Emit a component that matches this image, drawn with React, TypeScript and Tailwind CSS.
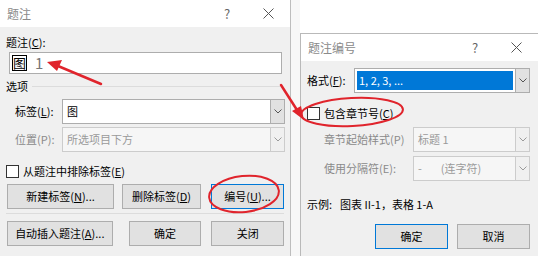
import React from "react";

const font = { fontFamily: '"Noto Sans CJK SC", "Noto Sans", sans-serif' };

function Chevron({ className = "" }: { className?: string }) {
    return (
        <svg width="8" height="5" viewBox="0 0 8 5" className={className}>
            <path d="M0.5 0.5 L4 4 L7.5 0.5" fill="none" stroke="currentColor" strokeWidth="1" />
        </svg>
    );
}

function Select({
    value,
    disabled,
    selected,
    className = "",
}: {
    value: React.ReactNode;
    disabled?: boolean;
    selected?: boolean;
    className?: string;
}) {
    return (
        <div
            className={`flex h-[25px] border ${disabled ? "border-[#cccccc] bg-[#f6f6f6]" : "border-[#adadad] bg-white"} ${className}`}
        >
            <div className="flex-1 flex items-center p-[2px]">
                <div
                    className={`w-full h-full flex items-center px-[2px] ${selected ? "bg-[#0078d7] text-white" : disabled ? "text-[#9a9a9a]" : "text-black"}`}
                >
                    {value}
                </div>
            </div>
            <div
                className={`w-[14px] flex items-center justify-center border-l ${disabled ? "border-[#cccccc] bg-[#f0f0f0] text-[#9a9a9a]" : "border-[#adadad] bg-[#e1e1e1] text-[#555]"}`}
            >
                <Chevron />
            </div>
        </div>
    );
}

function Button({
    children,
    focused,
    className = "",
}: {
    children: React.ReactNode;
    focused?: boolean;
    className?: string;
}) {
    return (
        <div
            className={`h-[25px] flex items-center justify-center bg-[#e1e1e1] border ${focused ? "border-[#0078d7]" : "border-[#adadad]"} text-black ${className}`}
        >
            {children}
        </div>
    );
}

function Checkbox() {
    return <div className="w-[13px] h-[13px] border border-[#333] bg-white shrink-0" />;
}

function TitleBar({ title }: { title: string }) {
    return (
        <div className="h-[27px] bg-white flex items-center pl-[7px] text-[#8a8a8a]">
            <span className="flex-1 text-[12px]">{title}</span>
            <span className="w-[39px] text-[13px] text-[#666]">?</span>
            <svg width="11" height="11" viewBox="0 0 11 11" className="mr-[16px] text-[#555]">
                <path d="M0.5 0.5 L10.5 10.5 M10.5 0.5 L0.5 10.5" stroke="currentColor" strokeWidth="1" />
            </svg>
        </div>
    );
}

function CaptionDialog() {
    return (
        <div className="w-[290px] h-full bg-[#f0f0f0] flex flex-col">
            <TitleBar title="题注" />
            <div className="flex flex-col px-[6px] text-[11px]">
                <div className="mt-[7px] h-[16px] leading-[16px]">
                    题注(<span className="underline">C</span>):
                </div>
                <div className="mt-[2px] ml-[3px] mr-[2px] h-[22px] bg-white border border-[#adadad] flex items-center px-[2px]">
                    <span className="border border-black leading-[14px] text-[13px] text-black">图</span>
                    <span className="ml-[8px] text-[15px] text-[#777]">1</span>
                </div>
                <div className="mt-[3px] h-[18px] flex items-center">
                    <span>选项</span>
                    <div className="ml-[4px] flex-1 border-t border-[#dcdcdc] mr-[4px]" />
                </div>
                <div className="mt-[4px] flex items-center">
                    <span className="w-[56px] pl-[9px]">
                        标签(<span className="underline">L</span>):
                    </span>
                    <Select value="图" className="flex-1 mr-[-1px]" />
                </div>
                <div className="mt-[3px] flex items-center text-[#8a8a8a]">
                    <span className="w-[56px] pl-[9px]">位置(P):</span>
                    <Select value="所选项目下方" disabled className="flex-1 mr-[-1px]" />
                </div>
                <div className="mt-[11px] flex items-center gap-[4px]">
                    <Checkbox />
                    <span>
                        从题注中排除标签(<span className="underline">E</span>)
                    </span>
                </div>
                <div className="mt-[4px] flex">
                    <Button className="w-[107px] ml-[1px]">
                        新建标签(<span className="underline">N</span>)...
                    </Button>
                    <Button className="w-[79px] ml-[8px]">
                        删除标签(<span className="underline">D</span>)
                    </Button>
                    <Button focused className="w-[73px] ml-[10px]">
                        编号(<span className="underline">U</span>)...
                    </Button>
                </div>
                <div className="mt-[4px] border-t border-[#dcdcdc]" />
                <div className="mt-[7px] flex">
                    <Button className="w-[106px] ml-[1px]">
                        自动插入题注(<span className="underline">A</span>)...
                    </Button>
                    <Button className="w-[73px] ml-[16px]">确定</Button>
                    <Button className="w-[73px] ml-[10px]">关闭</Button>
                </div>
            </div>
        </div>
    );
}

function NumberingDialog() {
    return (
        <div className="flex-1 h-full border-l border-t border-[#b9b9b9] bg-[#f0f0f0] flex flex-col">
            <TitleBar title="题注编号" />
            <div className="flex flex-col pl-[6px] pr-[8px] text-[11px]">
                <div className="mt-[7px] flex items-center">
                    <span className="w-[47px]">
                        格式(<span className="underline">F</span>):
                    </span>
                    <Select value="1, 2, 3, ..." selected className="flex-1" />
                </div>
                <div className="mt-[12px] flex items-center gap-[4px]">
                    <Checkbox />
                    <span>
                        包含章节号(<span className="underline">C</span>)
                    </span>
                </div>
                <div className="mt-[5px] flex items-center text-[#8a8a8a]">
                    <span className="w-[106px] pl-[17px]">章节起始样式(P)</span>
                    <Select value="标题 1" disabled className="flex-1" />
                </div>
                <div className="mt-[4px] flex items-center text-[#8a8a8a]">
                    <span className="w-[106px] pl-[17px]">使用分隔符(E):</span>
                    <Select
                        value={
                            <span>
                                -<span className="ml-[19px]">(连字符)</span>
                            </span>
                        }
                        disabled
                        className="flex-1"
                    />
                </div>
                <div className="mt-[15px] text-black">
                    示例:<span className="ml-[8px]">图表 II-1，表格 1-A</span>
                </div>
                <div className="mt-[12px] flex">
                    <Button focused className="w-[73px] ml-[68px]">确定</Button>
                    <Button className="w-[73px] ml-[9px]">取消</Button>
                </div>
            </div>
        </div>
    );
}

function Annotations() {
    const red = "#e0242c";
    return (
        <svg className="absolute inset-0 pointer-events-none" width="538" height="256" viewBox="0 0 538 256">
            <line x1="101" y1="84" x2="58" y2="66" stroke={red} strokeWidth="2.5" strokeLinecap="round" />
            <polygon points="47,62 62,60 57,71" fill={red} />
            <line x1="281" y1="85" x2="297" y2="110" stroke={red} strokeWidth="2.5" strokeLinecap="round" />
            <polygon points="304,120 292,111 301,106" fill={red} />
            <ellipse cx="244" cy="194" rx="35" ry="18" fill="none" stroke={red} strokeWidth="2" transform="rotate(-6 244 194)" />
            <ellipse cx="352" cy="112" rx="51" ry="14" fill="none" stroke={red} strokeWidth="2" transform="rotate(-3 352 112)" />
        </svg>
    );
}

export default function App() {
    return (
        <div className="relative w-[538px] h-[256px] overflow-hidden flex bg-white" style={font}>
            <CaptionDialog />
            <div className="w-[12px] h-full border-l border-[#bdbdbd] bg-[#f7f7f7]" />
            <div className="flex-1 pt-[33px] bg-white">
                <NumberingDialog />
            </div>
            <Annotations />
        </div>
    );
}
